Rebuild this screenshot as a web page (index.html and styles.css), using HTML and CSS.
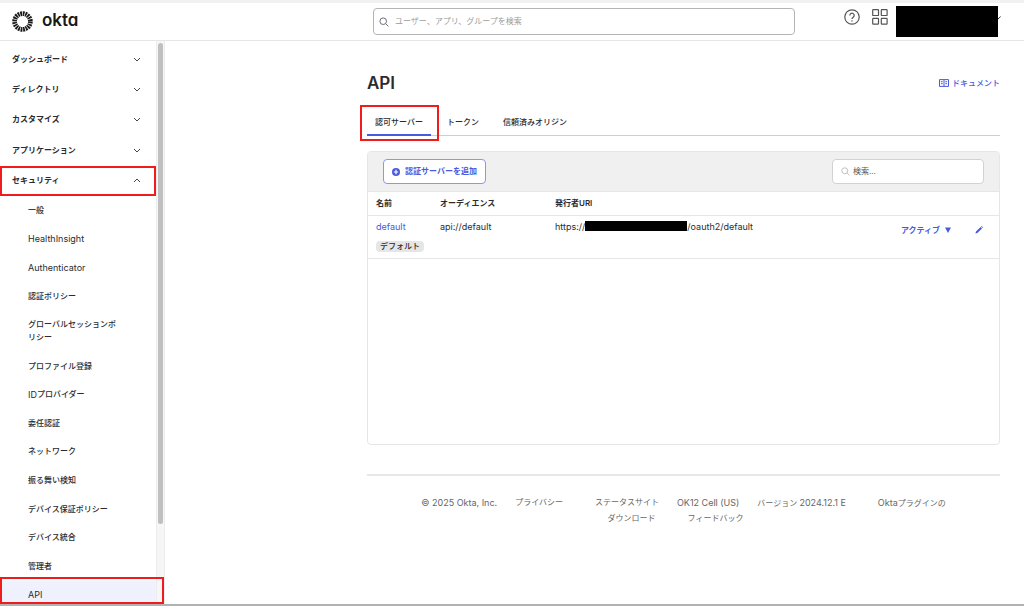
FILE: index.html
```html
<!DOCTYPE html>
<html lang="ja">
<head>
<meta charset="utf-8">
<meta name="viewport" content="width=device-width, initial-scale=1">
<title>Okta - API</title>
<link rel="stylesheet" href="styles.css">
</head>
<body>
<header class="topbar">
  <a class="brand" href="#">
    <svg class="brand-mark" viewBox="0 0 42 42" aria-hidden="true">
      <circle cx="21" cy="21" r="15.8" fill="none" stroke="#191919" stroke-width="9.4" stroke-dasharray="3.5 1.464"/>
    </svg>
    <span class="brand-name">okta</span>
  </a>
  <label class="global-search">
    <svg class="icon-search" viewBox="0 0 10 10" aria-hidden="true"><circle cx="4.2" cy="4.2" r="3.3"/><path d="M6.7 6.7 9.4 9.4"/></svg>
    <input type="search" aria-label="検索" placeholder="ユーザー、アプリ、グループを検索">
  </label>
  <div class="top-actions">
    <button class="icon-button" type="button" aria-label="ヘルプ">
      <svg viewBox="0 0 16 16"><circle cx="8" cy="8" r="7.2"/><path d="M5.8 6.4a2.2 2.2 0 1 1 3.4 1.8C8.3 8.8 8 9.1 8 10"/><path d="M8 11.3v1.2"/></svg>
    </button>
    <button class="icon-button" type="button" aria-label="アプリ">
      <svg viewBox="0 0 16 16"><rect x="0.7" y="0.7" width="5.8" height="5.8" rx=".6"/><rect x="9.3" y="0.7" width="5.8" height="5.8" rx=".6"/><rect x="0.7" y="9.3" width="5.8" height="5.8" rx=".6"/><rect x="9.3" y="9.3" width="5.8" height="5.8" rx=".6"/></svg>
    </button>
    <button class="account" type="button" aria-label="アカウント"><svg viewBox="0 0 4 4" aria-hidden="true"><path d="M0 3 2.6.6"/></svg></button>
  </div>
</header>

<div class="shell">
  <aside class="sidebar">
    <nav class="nav" aria-label="メイン">
      <div class="groups">
        <button class="group" type="button">ダッシュボード<svg viewBox="0 0 8 5"><path d="M1 1l3 3 3-3"/></svg></button>
        <button class="group" type="button">ディレクトリ<svg viewBox="0 0 8 5"><path d="M1 1l3 3 3-3"/></svg></button>
        <button class="group" type="button">カスタマイズ<svg viewBox="0 0 8 5"><path d="M1 1l3 3 3-3"/></svg></button>
        <button class="group" type="button">アプリケーション<svg viewBox="0 0 8 5"><path d="M1 1l3 3 3-3"/></svg></button>
        <button class="group marked" type="button" aria-expanded="true">セキュリティ<svg viewBox="0 0 8 5"><path d="M1 4l3-3 3 3"/></svg></button>
      </div>
      <div class="subnav">
        <a href="#">一般</a>
        <a class="latin" href="#">HealthInsight</a>
        <a class="latin" href="#">Authenticator</a>
        <a href="#">認証ポリシー</a>
        <a href="#">グローバルセッションポリシー</a>
        <a href="#">プロファイル登録</a>
        <a href="#"><span class="latin">ID</span>プロバイダー</a>
        <a href="#">委任認証</a>
        <a href="#">ネットワーク</a>
        <a href="#">振る舞い検知</a>
        <a href="#">デバイス保証ポリシー</a>
        <a href="#">デバイス統合</a>
        <a href="#">管理者</a>
        <a class="latin current" href="#" aria-current="page">API</a>
      </div>
    </nav>
    <div class="scroll-track"><div class="scroll-thumb"></div></div>
    <div class="sidebar-mark"></div>
  </aside>

  <main class="content">
    <div class="heading">
      <h1>API</h1>
      <a class="docs" href="#"><svg viewBox="0 0 10 8" aria-hidden="true"><path d="M.5.6h9v6.8h-9zM5 .6v6.8M1.9 2.7h1.8M1.9 4.7h1.8M6.3 2.7h1.8M6.3 4.7h1.8"/></svg>ドキュメント</a>
    </div>
    <nav class="tabs" aria-label="API">
      <a class="tab active" href="#" aria-current="true">認可サーバー</a>
      <a class="tab" href="#">トークン</a>
      <a class="tab" href="#">信頼済みオリジン</a>
    </nav>

    <section class="card">
      <div class="toolbar">
        <button class="add" type="button"><svg viewBox="0 0 8 8" aria-hidden="true"><circle cx="4" cy="4" r="4"/><path d="M4 1.8v4.4M1.8 4h4.4"/></svg>認証サーバーを追加</button>
        <label class="filter">
          <svg class="icon-search" viewBox="0 0 10 10" aria-hidden="true"><circle cx="4.2" cy="4.2" r="3.3"/><path d="M6.7 6.7 9.4 9.4"/></svg>
          <input type="search" aria-label="認可サーバーを検索" placeholder="検索...">
        </label>
      </div>
      <table class="servers">
        <thead>
          <tr><th class="col-name">名前</th><th class="col-audience">オーディエンス</th><th>発行者URI</th><th class="col-actions"></th></tr>
        </thead>
        <tbody>
          <tr>
            <td><a class="latin" href="#">default</a><br><span class="badge">デフォルト</span></td>
            <td class="latin">api://default</td>
            <td><span class="uri latin">https://<span class="redacted"></span>/oauth2/default</span></td>
            <td>
              <div class="row-actions">
                <button class="status" type="button">アクティブ<svg viewBox="0 0 6 6" aria-hidden="true"><path d="M0 .5h6L3 6z"/></svg></button>
                <button class="edit" type="button" aria-label="編集"><svg viewBox="0 0 8 8"><path d="M.4 7.6 1 5.6 5.6 1 7 2.4 2.4 7zM6.1.6 6.7.1 7.9 1.3 7.4 1.9z"/></svg></button>
              </div>
            </td>
          </tr>
        </tbody>
      </table>
    </section>

    <footer class="footer">
      <div class="footer-row">
        <span class="near latin">© 2025 Okta, Inc.</span>
        <a class="far" href="#">プライバシー</a>
        <a class="near" href="#">ステータスサイト</a>
        <a class="near latin" href="#">OK12 Cell (US)</a>
        <span class="far">バージョン <span class="latin">2024.12.1 E</span></span>
        <a href="#"><span class="latin">Okta</span>プラグインの</a>
      </div>
      <div class="footer-row second">
        <a class="far" href="#">ダウンロード</a>
        <a href="#">フィードバック</a>
      </div>
    </footer>
  </main>
</div>
</body>
</html>
```
FILE: styles.css
```css
:root {
  --blue: #4a5ade;
  --text: #2b2b2f;
  --line: #e6e6e8;
  --red: #ee1c1c;
}
* { box-sizing: border-box; }
body {
  margin: 0;
  height: 100vh;
  display: flex;
  flex-direction: column;
  border-top: 3px solid #f1f1f1;
  border-bottom: 2px solid #b2b2b2;
  background: #fff;
  color: var(--text);
  font: 8px/13px Inter, "Noto Sans CJK JP", sans-serif;
}
a { color: inherit; text-decoration: none; }
button, input { font: inherit; color: inherit; }
button { padding: 0; border: 0; background: none; cursor: pointer; }
svg { display: block; fill: none; stroke: currentColor; flex: none; }
input { border: 0; outline: 0; padding: 0; background: none; flex: 1; min-width: 0; }
.latin { font-size: 9px; }

/* Top bar */
.topbar {
  flex: none;
  display: flex;
  height: 38px;
  padding-right: 26px;
  border-bottom: 1px solid var(--line);
}
.brand {
  width: 373px;
  padding-left: 12px;
  display: flex;
  align-items: center;
  gap: 9px;
  color: #191919;
}
.brand-mark { width: 21px; height: 21px; }
.brand-name {
  font-size: 17px;
  line-height: 20px;
  font-weight: 600;
  font-feature-settings: "cv11", "ss03";
  padding-bottom: 4px;
}
.global-search {
  flex: 1;
  display: flex;
  align-items: center;
  gap: 6px;
  height: 27px;
  margin-top: 5px;
  padding: 0 5px;
  border: 1px solid #b4b4b4;
  border-radius: 4px;
}
.icon-search { width: 10px; height: 10px; stroke: #6e6e78; }
.global-search input::placeholder { color: #9c9c9c; opacity: 1; }
.top-actions { width: 203px; display: flex; justify-content: flex-end; }
.icon-button { width: 16px; height: 16px; margin: 6px 12px 0 0; color: #555; }
.icon-button + .icon-button { margin-right: 8px; }
.icon-button svg { width: 16px; height: 16px; stroke-width: 1.2; }
.account { position: relative; width: 102px; height: 31px; margin-top: 3px; background: #000; }
.account svg { position: absolute; left: 100%; top: 10px; width: 4px; height: 4px; }

/* Sidebar */
.shell { flex: 1; min-height: 0; display: flex; }
.sidebar { position: relative; width: 165px; flex: none; display: flex; }
.nav { flex: 1; overflow: hidden; }
.groups { display: grid; grid-auto-rows: 1fr; height: 152px; margin-top: 3px; }
.group {
  display: flex;
  align-items: center;
  justify-content: space-between;
  padding: 0 15px 0 12px;
  font-weight: 700;
}
.group svg { width: 8px; height: 5px; color: #444; }
.marked { border: 2px solid var(--red); padding: 0 13px 0 10px; }
.subnav { display: flex; flex-direction: column; min-height: 413px; }
.subnav a {
  flex: 1 0 auto;
  display: flex;
  align-items: center;
  padding: 0 36px 0 28px;
  font-weight: 500;
}
.subnav .latin { font-weight: 400; }
.subnav .current { background: #eff2fe; }
.scroll-track { width: 9px; padding: 2px 1px; background: #f6f6f6; border: solid #ededed; border-width: 0 1px; }
.scroll-thumb { height: 86%; border-radius: 3px; background: #c0c0c0; }
.sidebar-mark { position: absolute; left: 0; right: 1px; bottom: 0; height: 27px; border: 2px solid var(--red); }

/* Page content */
.content { flex: 1; min-width: 0; overflow: auto; padding: 29px 24px 0 202px; }
.heading { display: flex; align-items: center; justify-content: space-between; height: 26px; }
h1 { margin: 0; font-size: 17px; line-height: 24px; font-weight: 600; }
.docs { display: flex; align-items: center; gap: 3px; color: var(--blue); font-weight: 500; }
.docs svg { width: 10px; height: 8px; }
.tabs {
  display: flex;
  height: 40px;
  padding-top: 14px;
  border-bottom: 1px solid #cfcfcf;
}
.tab {
  position: relative;
  padding: 6px 8px 0;
  margin-right: 8px;
  font-weight: 500;
}
.active { border-bottom: 2px solid var(--blue); margin-bottom: -1px; }
.active::after {
  content: "";
  position: absolute;
  inset: -5px -8px -7px -7px;
  border: 2px solid var(--red);
}
.card {
  min-height: 294px;
  margin-top: 15px;
  border: 1px solid var(--line);
  border-radius: 4px;
  overflow: hidden;
}
.toolbar {
  display: flex;
  justify-content: space-between;
  align-items: center;
  height: 40px;
  padding: 0 15px;
  background: #f0f0f0;
  border-bottom: 1px solid var(--line);
}
.add {
  display: flex;
  align-items: center;
  gap: 5px;
  height: 25px;
  padding: 0 8px;
  border: 1px solid #8b97ee;
  border-radius: 4px;
  background: #fff;
  color: var(--blue);
  font-weight: 700;
}
.add svg { width: 8px; height: 8px; }
.add circle { fill: var(--blue); stroke: none; }
.add path { stroke: #fff; stroke-width: 1.2; }
.filter {
  display: flex;
  align-items: center;
  gap: 3px;
  width: 152px;
  height: 25px;
  padding: 0 8px;
  border: 1px solid #d2d2d2;
  border-radius: 4px;
  background: #fff;
}
.filter .icon-search { width: 9px; height: 9px; stroke: #bbb; }
.filter input::placeholder { color: #555; opacity: 1; }

.servers { width: 100%; border-collapse: collapse; table-layout: fixed; }
.servers th { height: 23px; padding: 0 8px; text-align: left; font-weight: 600; border-bottom: 1px solid var(--line); }
.servers td { height: 43px; padding: 4px 8px; vertical-align: top; border-bottom: 1px solid var(--line); }
.servers td > a { color: var(--blue); }
.col-name { width: 64px; }
.col-audience { width: 115px; }
.col-actions { width: 116px; }
.badge {
  display: inline-block;
  margin-top: 7px;
  padding: 0 4px;
  line-height: 11px;
  border-radius: 4px;
  background: #e6e6e6;
  font-weight: 500;
}
.uri { display: flex; align-items: center; }
.redacted { width: 102px; height: 10px; background: #000; }
.row-actions { display: flex; justify-content: space-between; align-items: center; padding: 4px 8px 0 10px; color: var(--blue); }
.status { display: flex; align-items: center; gap: 5px; font-weight: 700; }
.status svg { width: 6px; height: 6px; fill: currentColor; stroke: none; }
.edit svg { width: 8px; height: 8px; fill: currentColor; stroke: none; }

/* Footer */
.footer { margin-top: 29px; padding-top: 19px; border-top: 2px solid #e8e8e8; color: #666; line-height: 15px; }
.footer-row { display: flex; justify-content: center; }
.second { padding-right: 16px; }
.near { margin-right: 18px; }
.far { margin-right: 32px; }
```
